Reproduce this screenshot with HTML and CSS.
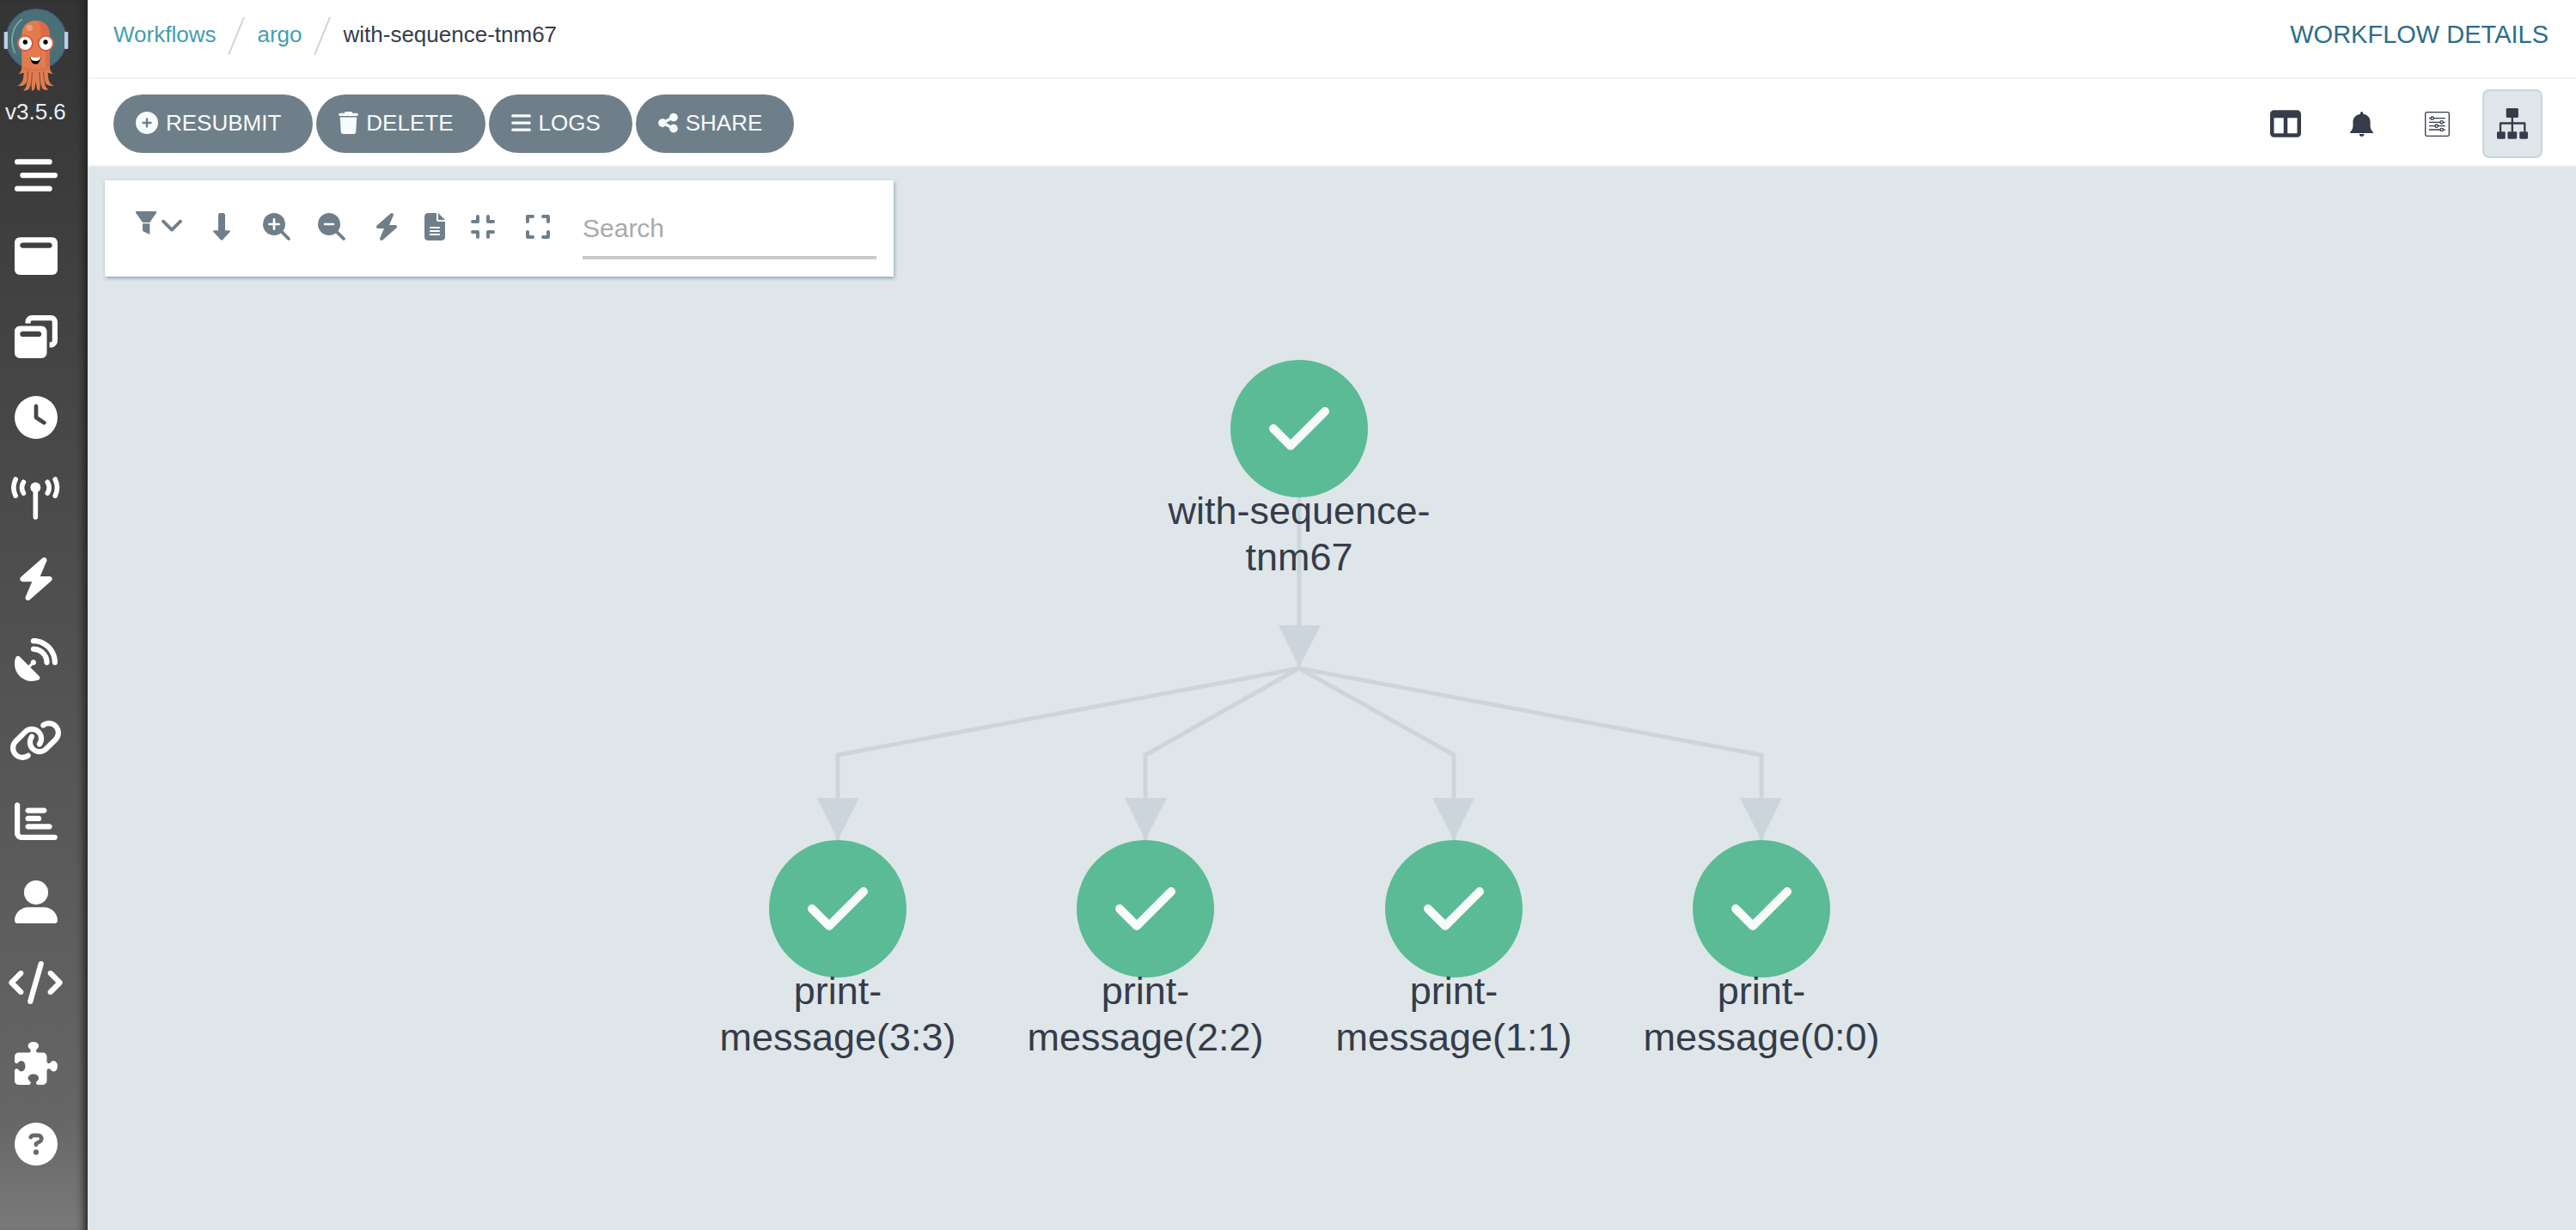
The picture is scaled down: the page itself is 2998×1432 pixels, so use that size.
FILE: index.html
```html
<!DOCTYPE html>
<html lang="en">
<head>
<meta charset="utf-8">
<title>with-sequence-tnm67 - Workflow Details</title>
<link rel="stylesheet" href="styles.css">
</head>
<body>
<svg width="0" height="0" class="symbols" aria-hidden="true">
  <symbol id="check" viewBox="0 0 448 512"><path d="M438.600 105.400c12.500 12.500 12.500 32.800 0 45.300l-256 256c-12.500 12.500-32.800 12.500-45.300 0l-128-128c-12.500-12.500-12.500-32.800 0-45.300s32.800-12.500 45.300 0L160 338.700 393.400 105.400c12.500-12.500 32.800-12.500 45.300 0z"/></symbol>
  <symbol id="bolt" viewBox="0 0 448 512"><path d="M349.400 44.600c5.900-13.700 1.500-29.700-10.600-38.500s-28.600-8-39.900 1.800l-256 224c-10 8.800-13.600 22.900-8.900 35.300S50.700 288 64 288l111.500 0L98.600 467.400c-5.900 13.700-1.500 29.700 10.600 38.500s28.600 8 39.900-1.800l256-224c10-8.800 13.600-22.900 8.900-35.300s-16.600-20.700-30-20.700l-111.500 0L349.400 44.600z"/></symbol>
</svg>
<div class="app">
  <aside class="sidebar">
    <a class="logo" href="#" aria-label="Argo home">
      <svg width="80" height="108" viewBox="0 0 240 324">
        <circle cx="126" cy="137" r="105" fill="#497076" stroke="#44617f" stroke-width="4"/>
        <path d="M76 68C43 94 32 140 52 184" fill="none" stroke="#82aaa6" stroke-width="5" stroke-linecap="round"/>
        <rect x="14" y="111" width="13" height="60" rx="3" fill="#bccfe8"/>
        <rect x="225" y="111" width="13" height="60" rx="3" fill="#bccfe8"/>
        <path d="M76 122C76 90 98 72 125 72S174 90 174 122V232C174 248 180 254 187 259L167 254C168 284 174 295 190 299C172 302 161 298 157 285C158 302 160 307 170 313C150 318 144 308 141 290C140 305 138 311 140 316C129 319 128 306 125 284C122 306 121 319 110 316C112 311 110 305 109 290C106 308 100 318 80 316C91 309 92 302 93 285C89 298 80 302 59 299C74 295 82 284 83 254L63 259C71 254 76 248 76 232Z" fill="#e27c4f"/>
        <path d="M125 72C152 72 174 90 174 122V232Q150 242 142 240V110C142 90 136 76 125 72Z" fill="#dc6b45"/>
        <path d="M142 120V240H160V160Z" fill="#e27c4f"/>
        <path d="M78 238Q125 252 172 238" fill="none" stroke="#dc6b45" stroke-width="5"/>
        <path d="M98 250Q98 280 90 300M112 252Q112 290 104 306M138 252Q138 290 146 306M152 250Q152 280 160 300" fill="none" stroke="#3b3b3b" stroke-width="2"/>
        <circle cx="103" cy="97" r="11" fill="#eb9d83"/>
        <circle cx="88" cy="151" r="26" fill="#fff" stroke="#d95b40" stroke-width="6"/>
        <circle cx="160" cy="151" r="26" fill="#fff" stroke="#d95b40" stroke-width="6"/>
        <circle cx="88" cy="147" r="8"/>
        <circle cx="159" cy="147" r="8"/>
        <path d="M106 197Q125 212 142 197C142 214 134 224 124 224S106 214 106 197Z"/>
        <path d="M106 197Q125 206 142 197L138 209Q124 217 110 209Z" fill="#fff"/>
      </svg>
    </a>
    <span class="version">v3.5.6</span>
    <nav class="side-nav" aria-label="Main">
      <a href="#" aria-label="Expand menu"><svg viewBox="0 0 512 512"><path d="M32 64H416a32 32 0 0 1 0 64H32a32 32 0 0 1 0-64zM96 224H480a32 32 0 0 1 0 64H96a32 32 0 0 1 0-64zM32 384H416a32 32 0 0 1 0 64H32a32 32 0 0 1 0-64z"/></svg></a>
      <a href="#" aria-label="Workflows"><svg viewBox="0 0 512 512"><path d="M64 32C28.700 32 0 60.700 0 96L0 416c0 35.300 28.700 64 64 64l384 0c35.300 0 64-28.700 64-64l0-320c0-35.300-28.700-64-64-64L64 32zM96 96l320 0c17.700 0 32 14.300 32 32s-14.300 32-32 32L96 160c-17.700 0-32-14.300-32-32s14.300-32 32-32z"/></svg></a>
      <a href="#" aria-label="Workflow templates"><svg viewBox="0 0 512 512"><path d="M432 64L208 64c-8.800 0-16 7.200-16 16l0 16-64 0 0-16c0-44.200 35.800-80 80-80L432 0c44.200 0 80 35.800 80 80l0 224c0 44.200-35.800 80-80 80l-16 0 0-64 16 0c8.800 0 16-7.200 16-16l0-224c0-8.800-7.200-16-16-16zM0 192c0-35.300 28.700-64 64-64l256 0c35.300 0 64 28.700 64 64l0 256c0 35.300-28.700 64-64 64L64 512c-35.300 0-64-28.700-64-64L0 192zm64 32c0 17.700 14.300 32 32 32l192 0c17.700 0 32-14.300 32-32s-14.300-32-32-32L96 192c-17.700 0-32 14.300-32 32z"/></svg></a>
      <a href="#" aria-label="Cron workflows"><svg viewBox="0 0 512 512"><path d="M256 0a256 256 0 1 1 0 512A256 256 0 1 1 256 0zM232 120V256c0 8 4 15.500 10.700 20l96 64c11 7.400 25.900 4.400 33.300-6.700s4.400-25.900-6.700-33.300L280 243.200V120c0-13.300-10.700-24-24-24s-24 10.700-24 24z"/></svg></a>
      <a href="#" aria-label="Event flow"><svg class="wide" viewBox="0 0 171 151"><g fill="none" stroke="#fff" stroke-width="17" stroke-linecap="round"><path d="M15 9Q1 39 15 67M43 19Q31 39 43 58M154 9Q168 39 154 67M127 19Q139 39 127 58M85 38V142"/></g><circle cx="85" cy="38" r="18"/></svg></a>
      <a href="#" aria-label="Sensors"><svg><use href="#bolt"/></svg></a>
      <a href="#" aria-label="Event sources"><svg viewBox="0 0 512 512"><path d="M192 32c0-17.700 14.300-32 32-32C383.100 0 512 128.900 512 288c0 17.700-14.300 32-32 32s-32-14.300-32-32C448 164.300 347.700 64 224 64c-17.700 0-32-14.300-32-32zM60.600 220.600L164.700 324.700l28.400-28.400c-.7-2.600-1.100-5.400-1.100-8.300c0-17.700 14.300-32 32-32s32 14.300 32 32s-14.300 32-32 32c-2.900 0-5.600-.4-8.300-1.100l-28.400 28.400L291.400 451.400c14.500 14.500 11.800 38.800-7.300 46.300C260.500 506.900 234.900 512 208 512C93.100 512 0 418.900 0 304c0-26.900 5.100-52.500 14.400-76.100c7.500-19 31.800-21.800 46.300-7.300zM224 96c106 0 192 86 192 192c0 17.700-14.300 32-32 32s-32-14.300-32-32c0-70.700-57.300-128-128-128c-17.700 0-32-14.300-32-32s14.300-32 32-32z"/></svg></a>
      <a href="#" aria-label="Workflow event bindings"><svg class="wider" viewBox="0 0 640 512"><path d="M579.800 267.700c56.500-56.500 56.500-148 0-204.500c-50-50-128.800-56.500-186.300-15.400l-1.600 1.100c-14.400 10.300-17.700 30.300-7.400 44.600s30.300 17.700 44.600 7.400l1.600-1.100c32.100-22.900 76-19.300 103.800 8.600c31.500 31.500 31.500 82.500 0 114L422.300 334.800c-31.500 31.500-82.500 31.500-114 0c-27.900-27.900-31.500-71.800-8.600-103.800l1.100-1.600c10.300-14.400 6.900-34.400-7.400-44.600s-34.400-6.900-44.600 7.400l-1.100 1.600C206.500 251.200 213 330 263 380c56.500 56.500 148 56.500 204.500 0L579.800 267.700zM60.200 244.300c-56.500 56.500-56.500 148 0 204.500c50 50 128.800 56.500 186.300 15.400l1.600-1.100c14.400-10.300 17.700-30.300 7.400-44.600s-30.300-17.700-44.600-7.400l-1.600 1.100c-32.100 22.900-76 19.300-103.800-8.600C74 372 74 321 105.500 289.500L217.700 177.200c31.500-31.500 82.500-31.500 114 0c27.900 27.900 31.500 71.800 8.600 103.900l-1.100 1.600c-10.300 14.400-6.900 34.400 7.400 44.600s34.400 6.900 44.600-7.400l1.100-1.600C433.500 260.800 427 182 377 132c-56.500-56.500-148-56.500-204.500 0L60.200 244.300z"/></svg></a>
      <a href="#" aria-label="Reports"><svg viewBox="0 0 512 512"><path d="M32 32c17.700 0 32 14.300 32 32l0 336c0 8.800 7.200 16 16 16l400 0c17.700 0 32 14.300 32 32s-14.300 32-32 32L80 480c-44.200 0-80-35.800-80-80L0 64C0 46.300 14.300 32 32 32zm96 96c0-17.700 14.300-32 32-32l192 0c17.700 0 32 14.300 32 32s-14.300 32-32 32l-192 0c-17.700 0-32-14.300-32-32zm32 64l128 0c17.700 0 32 14.300 32 32s-14.300 32-32 32l-128 0c-17.700 0-32-14.300-32-32s14.300-32 32-32zm0 96l256 0c17.700 0 32 14.300 32 32s-14.300 32-32 32l-256 0c-17.700 0-32-14.300-32-32s14.300-32 32-32z"/></svg></a>
      <a href="#" aria-label="User"><svg viewBox="0 0 512 512"><path d="M256 288A144 144 0 1 0 256 0a144 144 0 1 0 0 288zm-94.700 32C72.200 320 0 392.200 0 481.300c0 17 13.800 30.700 30.700 30.700H481.300c17 0 30.700-13.800 30.700-30.700C512 392.200 439.800 320 350.700 320H161.300z"/></svg></a>
      <a href="#" aria-label="API docs"><svg class="wider" viewBox="0 0 640 512"><path d="M392.800 1.200c-17-4.900-34.700 5-39.600 22l-128 448c-4.900 17 5 34.700 22 39.600s34.700-5 39.600-22l128-448c4.900-17-5-34.700-22-39.600zm80.600 120.100c-12.500 12.500-12.500 32.800 0 45.300L562.700 256l-89.400 89.400c-12.500 12.500-12.500 32.800 0 45.300s32.800 12.500 45.300 0l112-112c12.500-12.500 12.500-32.800 0-45.300l-112-112c-12.500-12.500-32.800-12.500-45.300 0zm-306.700 0c-12.500-12.500-32.800-12.500-45.300 0l-112 112c-12.500 12.500-12.500 32.800 0 45.300l112 112c12.500 12.500 32.800 12.500 45.300 0s12.500-32.800 0-45.300L77.300 256l89.400-89.400c12.500-12.500 12.500-32.800 0-45.300z"/></svg></a>
      <a href="#" aria-label="Plugins"><svg viewBox="0 0 512 512"><path d="M192 104.800c0-9.200-5.800-17.300-13.200-22.800C167.200 73.300 160 61.300 160 48c0-26.500 28.700-48 64-48s64 21.500 64 48c0 13.300-7.200 25.300-18.800 34c-7.400 5.500-13.200 13.600-13.200 22.800c0 12.800 10.400 23.200 23.200 23.200H336c26.500 0 48 21.500 48 48v56.800c0 12.800 10.400 23.200 23.200 23.200c9.200 0 17.300-5.800 22.800-13.200c8.700-11.600 20.700-18.800 34-18.800c26.500 0 48 28.700 48 64s-21.500 64-48 64c-13.300 0-25.300-7.200-34-18.800c-5.500-7.400-13.600-13.200-22.800-13.200c-12.800 0-23.200 10.400-23.200 23.200V464c0 26.500-21.500 48-48 48H279.200c-12.800 0-23.200-10.400-23.200-23.200c0-9.200 5.800-17.300 13.200-22.800c11.600-8.700 18.800-20.700 18.800-34c0-26.500-28.700-48-64-48s-64 21.500-64 48c0 13.300 7.200 25.300 18.800 34c7.400 5.500 13.200 13.600 13.200 22.800c0 12.800-10.400 23.200-23.200 23.200H48c-26.500 0-48-21.500-48-48V343.200C0 330.400 10.400 320 23.200 320c9.200 0 17.300 5.800 22.800 13.200C54.700 344.800 66.700 352 80 352c26.500 0 48-28.700 48-64s-21.500-64-48-64c-13.300 0-25.300 7.200-34 18.800C40.500 250.200 32.400 256 23.200 256C10.400 256 0 245.600 0 232.800V176c0-26.500 21.500-48 48-48H168.800c12.800 0 23.200-10.400 23.200-23.200z"/></svg></a>
      <a href="#" aria-label="Help"><svg viewBox="0 0 512 512"><path d="M256 512A256 256 0 1 0 256 0a256 256 0 1 0 0 512zM169.800 165.300c7.900-22.300 29.100-37.300 52.800-37.300h58.300c34.900 0 63.100 28.300 63.100 63.100c0 22.600-12.100 43.500-31.700 54.800L280 264.400c-.2 13-10.900 23.600-24 23.600c-13.300 0-24-10.700-24-24V250.500c0-8.600 4.600-16.500 12.100-20.800l44.300-25.400c4.700-2.700 7.600-7.700 7.600-13.100c0-8.400-6.800-15.100-15.100-15.100H222.600c-3.400 0-6.400 2.100-7.500 5.300l-.4 1.200c-4.400 12.500-18.200 19-30.600 14.600s-19-18.200-14.600-30.600l.4-1.200zM224 352a32 32 0 1 1 64 0 32 32 0 1 1 -64 0z"/></svg></a>
    </nav>
  </aside>

  <div class="page">
    <header class="top-bar">
      <nav class="breadcrumbs" aria-label="Breadcrumb">
        <a class="crumb" href="#">Workflows</a>
        <svg class="slash" width="20" height="44" viewBox="0 0 20 44"><path d="M1 44L19 0"/></svg>
        <a class="crumb" href="#">argo</a>
        <svg class="slash" width="20" height="44" viewBox="0 0 20 44"><path d="M1 44L19 0"/></svg>
        <span class="crumb">with-sequence-tnm67</span>
      </nav>
      <h1 class="page-title">WORKFLOW DETAILS</h1>
    </header>

    <div class="toolbar">
      <div class="actions">
        <button class="action" type="button"><svg width="26" height="26" viewBox="0 0 512 512"><path d="M256 512A256 256 0 1 0 256 0a256 256 0 1 0 0 512zM232 344V280H168c-13.300 0-24-10.700-24-24s10.700-24 24-24h64V168c0-13.300 10.700-24 24-24s24 10.700 24 24v64h64c13.300 0 24 10.700 24 24s-10.700 24-24 24H280v64c0 13.300-10.700 24-24 24s-24-10.700-24-24z"/></svg>RESUBMIT</button>
        <button class="action" type="button"><svg width="23" height="26" viewBox="0 0 448 512"><path d="M135.200 17.700L128 32H32C14.300 32 0 46.300 0 64S14.300 96 32 96H416c17.700 0 32-14.300 32-32s-14.300-32-32-32H320l-7.200-14.300C307.400 6.800 296.300 0 284.200 0H163.800c-12.100 0-23.200 6.800-28.600 17.700zM416 128H32L53.200 467c1.600 25.300 22.600 45 47.900 45H346.900c25.300 0 46.300-19.700 47.900-45L416 128z"/></svg>DELETE</button>
        <button class="action" type="button"><svg width="23" height="26" viewBox="0 0 448 512"><path d="M32 64H416a32 32 0 0 1 0 64H32a32 32 0 0 1 0-64zM32 224H416a32 32 0 0 1 0 64H32a32 32 0 0 1 0-64zM32 384H416a32 32 0 0 1 0 64H32a32 32 0 0 1 0-64z"/></svg>LOGS</button>
        <button class="action" type="button"><svg width="23" height="26" viewBox="0 0 448 512"><path d="M352 224c53 0 96-43 96-96s-43-96-96-96s-96 43-96 96c0 4 .2 8 .7 11.900l-94.100 47C145.400 170.200 121.900 160 96 160c-53 0-96 43-96 96s43 96 96 96c25.900 0 49.400-10.200 66.600-26.900l94.100 47c-.5 3.900-.7 7.800-.7 11.900c0 53 43 96 96 96s96-43 96-96s-43-96-96-96c-25.900 0-49.400 10.200-66.600 26.900l-94.100-47c.5-3.900 .7-7.800 .7-11.900s-.2-8-.7-11.900l94.100-47C302.600 213.800 326.100 224 352 224z"/></svg>SHARE</button>
      </div>
      <div class="views">
        <button class="view" type="button" aria-label="Columns"><svg width="36" height="36" viewBox="0 0 512 512"><path d="M0 96C0 60.700 28.700 32 64 32H448c35.300 0 64 28.700 64 64V416c0 35.300-28.700 64-64 64H64c-35.300 0-64-28.700-64-64V96zm64 64V416H224V160H64zm384 0H288V416H448V160z"/></svg></button>
        <button class="view" type="button" aria-label="Notifications"><svg width="27" height="29" viewBox="0 0 81 88"><path d="M36 8V5a5 5 0 0 1 10 0V8C61 10 71 21 71 35V49C71 59 75 65 81 72V76H0V72C6 65 10 59 10 49V35C10 21 21 10 36 8ZM32 79H50C49 85 46 88 41 88S33 85 32 79Z"/></svg></button>
        <button class="view" type="button" aria-label="Parameters"><svg width="29" height="29" viewBox="0 0 87 87"><g fill="none" stroke="#363c4a" stroke-width="4"><rect x="2" y="2" width="83" height="83" rx="5"/><path d="M15 23H71M15 37H71M15 50H71M15 63H71"/><g fill="#fff"><circle cx="26" cy="23" r="5"/><circle cx="59" cy="37" r="5"/><circle cx="41" cy="50" r="5"/><circle cx="59" cy="63" r="5"/></g></g></svg></button>
        <button class="view view--active" type="button" aria-label="Graph" aria-pressed="true"><svg width="36" height="36" viewBox="0 0 107 107"><rect x="32" width="42" height="33" rx="4"/><rect y="81" width="29" height="25" rx="4"/><rect x="37" y="81" width="32" height="25" rx="4"/><rect x="78" y="81" width="29" height="25" rx="4"/><path d="M53 30V82M12 82V52H96V82" fill="none" stroke="#363c4a" stroke-width="7" stroke-linejoin="round"/></svg></button>
      </div>
    </div>

    <main class="graph-area">
      <div class="graph">
        <svg class="edges" width="2160" height="1040" viewBox="0 0 2160 1040">
          <g fill="none" stroke="#cdd5da" stroke-width="5">
            <path d="M1410 385V584"/>
            <path d="M1410 584L873 685V784"/>
            <path d="M1410 584L1231 685V784"/>
            <path d="M1410 584L1590 685V784"/>
            <path d="M1410 584L1948 685V784"/>
          </g>
          <path fill="#cdd5dc" d="M1386 534H1435L1410 583ZM849 735H898L873 784ZM1207 735H1256L1231 784ZM1565 735H1614L1590 784ZM1923 735H1972L1948 784Z"/>
        </svg>
        <div class="node node--root"><span class="node-icon"><svg width="70" height="80"><use href="#check"/></svg></span><span class="node-label">with-sequence-tnm67</span></div>
        <div class="node node--3"><span class="node-icon"><svg width="70" height="80"><use href="#check"/></svg></span><span class="node-label">print-message(3:3)</span></div>
        <div class="node node--2"><span class="node-icon"><svg width="70" height="80"><use href="#check"/></svg></span><span class="node-label">print-message(2:2)</span></div>
        <div class="node node--1"><span class="node-icon"><svg width="70" height="80"><use href="#check"/></svg></span><span class="node-label">print-message(1:1)</span></div>
        <div class="node node--0"><span class="node-icon"><svg width="70" height="80"><use href="#check"/></svg></span><span class="node-label">print-message(0:0)</span></div>
      </div>

      <div class="graph-tools">
        <button class="tool tool--filter" type="button" aria-label="Filter"><svg width="54" height="32" viewBox="0 0 162 96"><path d="M0 0H72V5L49 39H24L0 5ZM24 43H49V81L24 69Z"/><path d="M96 35L126 65L156 35" fill="none" stroke="#6f7f8a" stroke-width="11" stroke-linecap="round" stroke-linejoin="round"/></svg></button>
        <button class="tool" type="button" aria-label="Vertical layout"><svg width="20" height="32" viewBox="0 0 60 96"><path d="M18 7Q18 0 25 0H35Q42 0 42 7V61H57Q61 62 59 66L34 93Q30 98 26 93L1 66Q-1 62 3 61H18Z"/></svg></button>
        <button class="tool" type="button" aria-label="Zoom in"><svg width="32" height="32" viewBox="0 0 96 96"><circle cx="39" cy="39" r="39"/><path d="M62 62L90 90" fill="none" stroke="#6f7f8a" stroke-width="11" stroke-linecap="round"/><path d="M22 39H56M39 22V56" stroke="#fff" stroke-width="8" stroke-linecap="round"/></svg></button>
        <button class="tool" type="button" aria-label="Zoom out"><svg width="32" height="32" viewBox="0 0 96 96"><circle cx="39" cy="39" r="39"/><path d="M62 62L90 90" fill="none" stroke="#6f7f8a" stroke-width="11" stroke-linecap="round"/><path d="M24 39H54" stroke="#fff" stroke-width="8" stroke-linecap="round"/></svg></button>
        <button class="tool" type="button" aria-label="Fast renderer"><svg width="28" height="32"><use href="#bolt"/></svg></button>
        <button class="tool tool--narrow" type="button" aria-label="Show artifacts"><svg width="24" height="32" viewBox="0 0 384 512"><path d="M64 0C28.700 0 0 28.700 0 64V448c0 35.300 28.700 64 64 64H320c35.300 0 64-28.700 64-64V160H256c-17.700 0-32-14.300-32-32V0H64zM256 0V128H384L256 0zM112 256H272c8.800 0 16 7.200 16 16s-7.200 16-16 16H112c-8.800 0-16-7.200-16-16s7.200-16 16-16zm0 64H272c8.800 0 16 7.200 16 16s-7.200 16-16 16H112c-8.800 0-16-7.200-16-16s7.200-16 16-16zm0 64H272c8.800 0 16 7.200 16 16s-7.200 16-16 16H112c-8.800 0-16-7.200-16-16s7.200-16 16-16z"/></svg></button>
        <button class="tool" type="button" aria-label="Collapse all"><svg width="28" height="28" viewBox="0 0 84 84"><path class="corner" d="M6 24H24V6M60 6V24H78M6 60H24V78M60 78V60H78"/></svg></button>
        <button class="tool" type="button" aria-label="Expand all"><svg width="28" height="28" viewBox="0 0 84 84"><path class="corner" d="M6 24V6H24M60 6H78V24M6 60V78H24M60 78H78V60"/></svg></button>
        <input class="search" type="search" placeholder="Search" aria-label="Search">
      </div>
    </main>
  </div>
</div>
</body>
</html>
```
FILE: styles.css
```css
* {
  box-sizing: border-box;
}

body {
  margin: 0;
  font-family: "Liberation Sans", Arial, Helvetica, sans-serif;
  font-size: 26px;
  line-height: 32px;
  color: #363c4a;
  background: #dee6e9;
}

a {
  color: #449eae;
  text-decoration: none;
}

button {
  display: flex;
  align-items: center;
  justify-content: center;
  padding: 0;
  border: 0;
  background: none;
  font: inherit;
  cursor: pointer;
}

svg {
  display: block;
  flex: none;
}

.symbols {
  position: absolute;
}

.app {
  display: flex;
  min-height: 100vh;
}

/* Sidebar */
.sidebar {
  flex: none;
  display: flex;
  flex-direction: column;
  width: 102px;
  background: linear-gradient(#343434, #4d4d4d 45%, #666 91%, #7a7a7a);
  box-shadow: inset -10px 0 10px -6px #222220;
}

.logo {
  height: 114px;
}

.version {
  padding-left: 6px;
  color: #e8eef2;
}

.side-nav {
  display: flex;
  flex-direction: column;
  padding-top: 11px;
}

.side-nav a {
  display: flex;
  align-items: center;
  justify-content: center;
  width: 84px;
  height: 94px;
}

.side-nav svg {
  width: 50px;
  height: 50px;
  fill: #fff;
}

.side-nav .wide,
.side-nav .wider {
  margin-right: 2px;
}

.side-nav .wide {
  width: 57px;
}

.side-nav .wider {
  width: 63px;
}

/* Header */
.page {
  flex: 1;
  display: flex;
  flex-direction: column;
  min-width: 0;
}

.top-bar {
  display: flex;
  align-items: center;
  justify-content: space-between;
  height: 92px;
  padding: 0 32px 6px 30px;
  border-bottom: 2px solid #eff3f5;
  background: #fff;
}

.breadcrumbs {
  display: flex;
  align-items: center;
  gap: 14px;
}

.crumb {
  padding-bottom: 5px;
}

.slash {
  fill: none;
  stroke: #ccd6dd;
  stroke-width: 2px;
}

.page-title {
  margin: 0;
  padding-bottom: 4px;
  font-size: 29px;
  font-weight: 400;
  color: #2c6e89;
}

.toolbar {
  display: flex;
  align-items: center;
  justify-content: space-between;
  height: 102px;
  padding: 4px 39px 0 30px;
  border-bottom: 2px solid #eff3f5;
  background: #fff;
}

.actions {
  display: flex;
  gap: 4px;
}

.action {
  gap: 9px;
  height: 68px;
  padding: 0 37px 2px 26px;
  border-radius: 34px;
  color: #f8fbfb;
  background: #6f7f8a;
}

.action svg {
  fill: #f8fbfb;
}

.views {
  display: flex;
  gap: 18px;
}

.view {
  width: 70px;
  height: 80px;
  border: 2px solid transparent;
  border-radius: 8px;
}

.view svg {
  fill: #363c4a;
}

.view--active {
  border-color: #ccd3da;
  background: #dee6e9;
}

/* Graph */
.graph-area {
  flex: 1;
  position: relative;
  overflow: auto;
}

.graph {
  position: relative;
  width: 2160px;
  height: 1040px;
}

.edges {
  position: absolute;
  top: 0;
  left: 0;
}

.node {
  position: absolute;
  display: flex;
  flex-direction: column;
  align-items: center;
  width: 340px;
}

.node--root {
  left: 1240px;
  top: 225px;
}

.node--3 {
  left: 703px;
  top: 784px;
}

.node--2 {
  left: 1061px;
  top: 784px;
}

.node--1 {
  left: 1420px;
  top: 784px;
}

.node--0 {
  left: 1778px;
  top: 784px;
}

.node-icon {
  display: flex;
  align-items: center;
  justify-content: center;
  width: 160px;
  height: 160px;
  border-radius: 50%;
  background: #5abb96;
}

.node-icon svg {
  fill: #f8fbfb;
}

.node-label {
  width: 100%;
  margin-top: -11px;
  font-size: 45px;
  line-height: 54px;
  text-align: center;
}

/* Graph tools */
.graph-tools {
  position: absolute;
  top: 16px;
  left: 20px;
  display: flex;
  align-items: center;
  width: 918px;
  height: 112px;
  padding: 0 20px 0 36px;
  background: #fff;
  box-shadow: 1px 2px 4px #8fa4b1;
}

.tool {
  width: 64px;
  height: 64px;
  padding-bottom: 4px;
}

.tool--filter {
  width: 54px;
  margin-right: 14px;
  padding-bottom: 8px;
}

.tool--narrow {
  width: 48px;
}

.tool svg {
  fill: #6f7f8a;
}

.tool .corner {
  fill: none;
  stroke: #6f7f8a;
  stroke-width: 12px;
  stroke-linecap: round;
  stroke-linejoin: round;
}

.search {
  flex: 1;
  min-width: 0;
  height: 72px;
  margin-left: 20px;
  padding: 4px 0 0;
  border: 0;
  border-bottom: 4px solid #cacaca;
  border-radius: 0;
  outline: 0;
  background: none;
  font: inherit;
  font-size: 30px;
  color: #363c4a;
}

.search::placeholder {
  color: #aaa;
  opacity: 1;
}
```
